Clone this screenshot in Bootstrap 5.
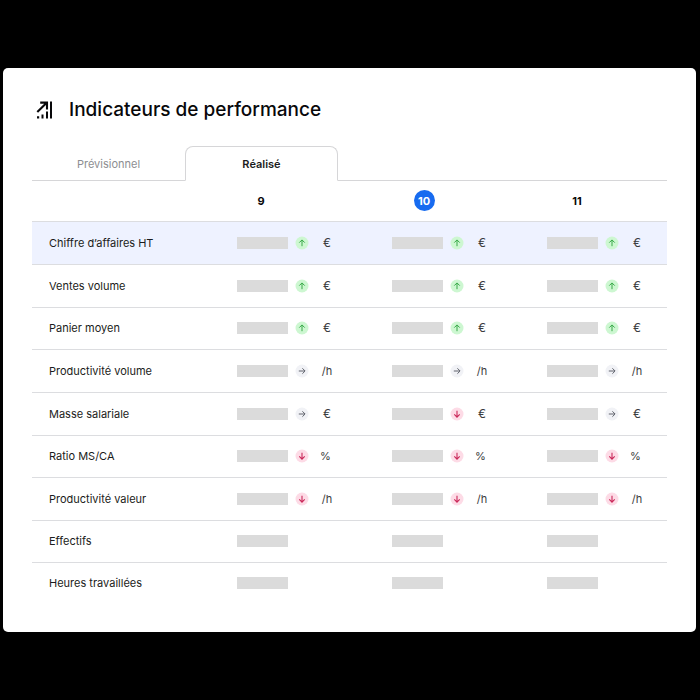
<!DOCTYPE html>
<html lang="fr">
<head>
<meta charset="utf-8">
<meta name="viewport" content="width=device-width, initial-scale=1">
<title>Indicateurs de performance</title>
<link href="https://cdn.jsdelivr.net/npm/bootstrap@5.3.0/dist/css/bootstrap.min.css" rel="stylesheet">
<style>
  body { background: #000; color: #1b1c20; font-family: Inter, "Liberation Sans", sans-serif; font-size: 11px; line-height: 16px; }
  .panel { margin: 68px 4px 0 3px; padding: 30px 29px 28px; background: #fff; border-radius: 5px; }
  .panel-title { font-size: 19px; line-height: 24px; font-weight: 500; color: #08080a; }
  .title-icon { width: 18px; height: 18px; margin: 0 15px 0 4px; }
  .nav-tabs { --bs-nav-tabs-border-color: #d6d6d8; --bs-nav-tabs-border-radius: 8px; margin-top: 24px; }
  .nav-tabs .nav-link { width: 153px; height: 35px; padding: 0; font-size: 11px; color: #8d8e91; }
  .nav-tabs .nav-link.active { color: #1b1c20; font-weight: 600; border-color: #d6d6d8 #d6d6d8 #fff; }
  .kpi { table-layout: fixed; width: 100%; }
  .kpi th, .kpi td { padding: 0; vertical-align: middle; }
  .kpi tr { height: 43px; border-bottom: 1px solid #dcdde0; }
  .kpi tbody tr:nth-child(3n), .kpi tbody tr:nth-child(8) { height: 42px; }
  .kpi thead tr { height: 40px; }
  .kpi tbody tr:last-child { border-bottom: 0; }
  .kpi tbody th { font-weight: 400; padding-left: 17px; }
  .kpi tbody tr.current { background: #eef2ff; }
  .col-label { width: 32.3%; }
  .col-day { width: 24.4%; }
  .day { width: 48px; text-align: center; font-weight: 700; color: #08080a; }
  .day-today { width: 64px; }
  .day-last { width: 60px; }
  .today { width: 21px; height: 21px; background: #176bf0; color: #fff; }
  .bar { width: 51px; height: 12px; margin-right: 7px; background: #dbdbdb; }
  .trend { width: 14px; height: 14px; margin-right: 11px; }
  .unit { width: 14px; text-align: center; color: #3b3c40; }
  .unit-euro { font-size: 12px; }
  .unit-percent { text-align: left; }
</style>
</head>
<body>
<svg class="d-none" aria-hidden="true">
  <symbol id="up" viewBox="0 0 14 14"><circle cx="7" cy="7" r="6.5" fill="#cdf7d1"/><path d="M7 10.2V4M4.3 6.6 7 3.9l2.7 2.7" fill="none" stroke="#38a948" stroke-width="1"/></symbol>
  <symbol id="flat" viewBox="0 0 14 14"><circle cx="7" cy="7" r="6.5" fill="#f1f2f6"/><path d="M3.8 7H10M7.4 4.3 10.1 7 7.4 9.7" fill="none" stroke="#62656e" stroke-width="1"/></symbol>
  <symbol id="down" viewBox="0 0 14 14"><circle cx="7" cy="7" r="6.5" fill="#fddbe6"/><path d="M7 3.8V10M4.3 7.4 7 10.1l2.7-2.7" fill="none" stroke="#ca2859" stroke-width="1.1"/></symbol>
</svg>
<main class="panel">
  <header class="d-flex align-items-center">
    <svg class="title-icon" viewBox="0 0 18 18" aria-hidden="true">
      <path d="M1.3 11 10.2 2.2M4.2 1.6h6.8v6.8" fill="none" stroke="#08080a" stroke-width="2.1"/>
      <path d="M14 .5h2v17h-2zM10 10.5h2v7h-2zM5.5 13.5h2v4h-2zM1 15.3h2.2v2.2H1z" fill="#08080a"/>
    </svg>
    <h1 class="panel-title mb-0">Indicateurs de performance</h1>
  </header>
  <ul class="nav nav-tabs" role="tablist">
    <li class="nav-item" role="presentation"><button class="nav-link" type="button" role="tab" aria-selected="false">Prévisionnel</button></li>
    <li class="nav-item" role="presentation"><button class="nav-link active" type="button" role="tab" aria-selected="true">Réalisé</button></li>
  </ul>
  <table class="kpi">
    <thead>
      <tr>
        <td class="col-label"></td>
        <th class="col-day" scope="col"><div class="day">9</div></th>
        <th class="col-day" scope="col"><div class="day day-today d-flex justify-content-center"><span class="today rounded-circle d-flex align-items-center justify-content-center">10</span></div></th>
        <th scope="col"><div class="day day-last">11</div></th>
      </tr>
    </thead>
    <tbody id="rows"></tbody>
  </table>
</main>
<script src="https://cdn.jsdelivr.net/npm/bootstrap@5.3.0/dist/js/bootstrap.bundle.min.js"></script>
<script>
  const rows = [
    ["Chiffre d’affaires HT", "€", ["up", "up", "up"]],
    ["Ventes volume", "€", ["up", "up", "up"]],
    ["Panier moyen", "€", ["up", "up", "up"]],
    ["Productivité volume", "/h", ["flat", "flat", "flat"]],
    ["Masse salariale", "€", ["flat", "down", "flat"]],
    ["Ratio MS/CA", "%", ["down", "down", "down"]],
    ["Productivité valeur", "/h", ["down", "down", "down"]],
    ["Effectifs", "", ["", "", ""]],
    ["Heures travaillées", "", ["", "", ""]]
  ];
  const unitClass = { "€": "unit-euro", "%": "unit-percent", "/h": "unit-hour" };
  document.getElementById("rows").innerHTML = rows.map(([label, unit, trends], i) =>
    `<tr class="${i ? "" : "current"}"><th scope="row">${label}</th>` + trends.map(t =>
      `<td><div class="d-flex align-items-center"><span class="bar"></span>` +
      (t ? `<svg class="trend" aria-hidden="true"><use href="#${t}"/></svg><span class="unit ${unitClass[unit]}">${unit}</span>` : "") +
      `</div></td>`).join("") + `</tr>`).join("");
</script>
</body>
</html>
